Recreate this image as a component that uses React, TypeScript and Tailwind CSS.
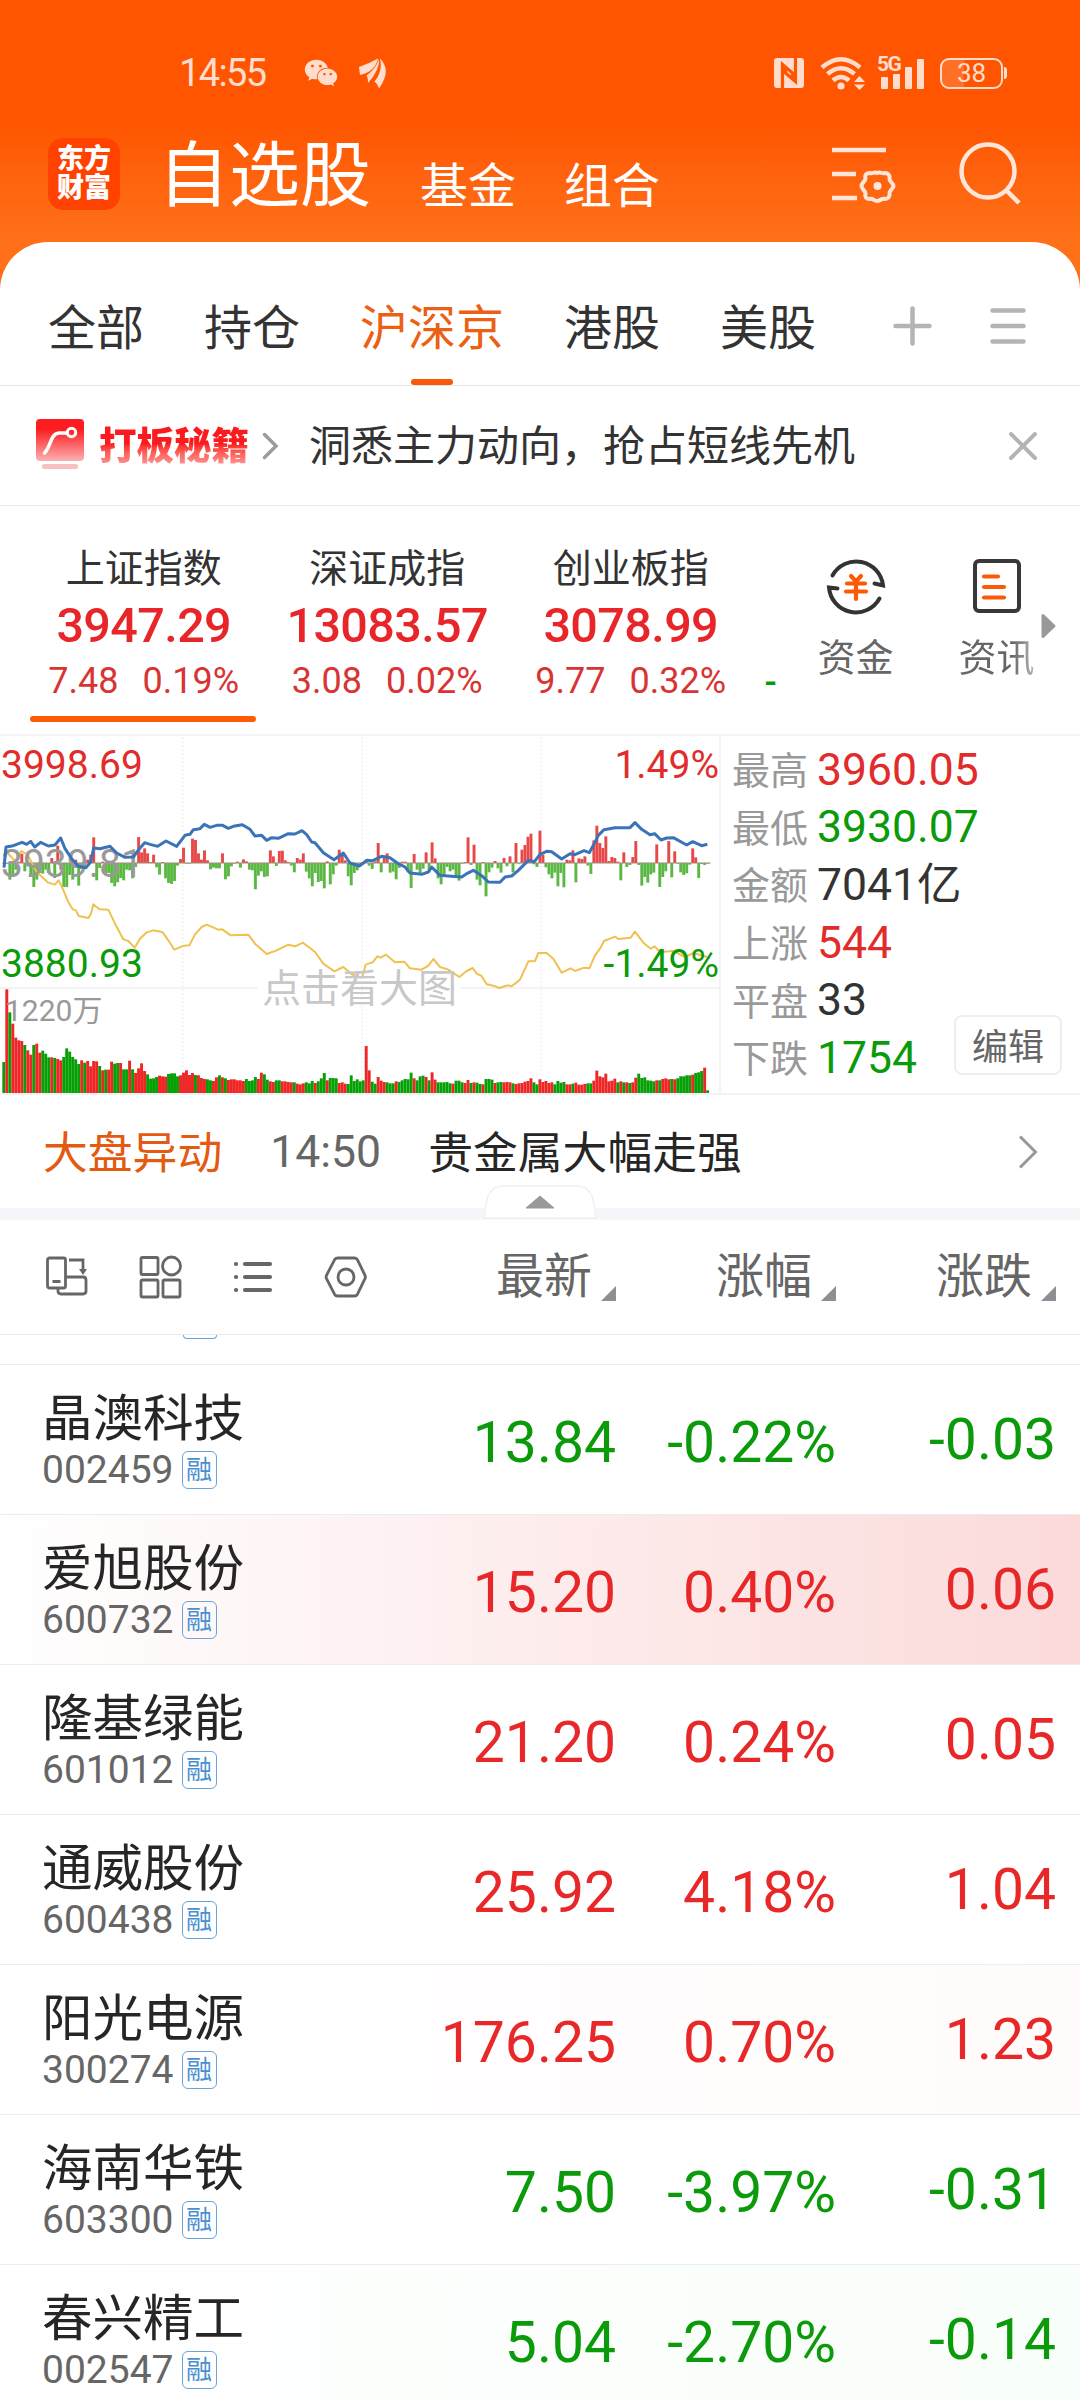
import { FaWeixin } from "react-icons/fa";

const indices = [
  { name: "上证指数", value: "3947.29", diff: "7.48", pct: "0.19%", active: true },
  { name: "深证成指", value: "13083.57", diff: "3.08", pct: "0.02%", active: false },
  { name: "创业板指", value: "3078.99", diff: "9.77", pct: "0.32%", active: false },
];

const summary = [
  { label: "最高", value: "3960.05", color: "text-[#e22c2c]" },
  { label: "最低", value: "3930.07", color: "text-[#0a9a0a]" },
  { label: "金额", value: "7041亿", color: "text-[#333333]" },
  { label: "上涨", value: "544", color: "text-[#e22c2c]" },
  { label: "平盘", value: "33", color: "text-[#333333]" },
  { label: "下跌", value: "1754", color: "text-[#0a9a0a]" },
];

const stocks = [
  { name: "晶澳科技", code: "002459", price: "13.84", pct: "-0.22%", diff: "-0.03", bg: "" },
  { name: "爱旭股份", code: "600732", price: "15.20", pct: "0.40%", diff: "0.06", bg: "bg-linear-to-r from-white to-[#fbdada]" },
  { name: "隆基绿能", code: "601012", price: "21.20", pct: "0.24%", diff: "0.05", bg: "" },
  { name: "通威股份", code: "600438", price: "25.92", pct: "4.18%", diff: "1.04", bg: "" },
  { name: "阳光电源", code: "300274", price: "176.25", pct: "0.70%", diff: "1.23", bg: "bg-linear-to-r from-white to-[#fffbfb]" },
  { name: "海南华铁", code: "603300", price: "7.50", pct: "-3.97%", diff: "-0.31", bg: "" },
  { name: "春兴精工", code: "002547", price: "5.04", pct: "-2.70%", diff: "-0.14", bg: "bg-linear-to-r from-white to-[#f8fef9]" },
];

// one value per minute; negative = falling minute
const volume = [
  -93, 311, -242, 208, 166, 158, 156, -144, 128, 115,
  -144, 148, 121, -127, -118, -107, 107, -105, 102, 98,
  -108, -134, -124, -108, -101, -87, 98, -91, 96, 80,
  96, 95, -81, 68, -70, 70, 94, -88, -90, 90,
  -71, -71, 97, -71, 60, 74, 89, 66, -56, -43,
  -44, -48, 52, 50, 49, -57, -59, -59, -50, 53,
  61, 68, 54, 60, -54, 53, 45, 42, -41, -38,
  36, 47, -53, 47, -44, 39, 41, 41, 38, 38,
  36, -42, -36, -38, -48, 42, 61, -56, -40, 35,
  33, -38, -38, 35, 35, 33, 32, -32, 28, 26,
  29, -32, -29, -36, 30, -35, -44, -60, 38, -45,
  -45, -44, 30, 32, 28, -27, -53, -36, -41, -35,
  -38, 141, 68, -34, -28, 48, 37, 33, -32, -29,
  -29, 35, -33, -38, -42, -41, -61, 44, -38, -50,
  -52, 48, -38, 62, 40, -32, -32, -32, -33, -29,
  28, -37, -37, -32, 30, 39, -30, 32, -31, -27,
  26, -42, -42, -40, 30, -32, -33, 32, 33, 32,
  -29, 27, 29, 30, 34, 36, 44, -32, -26, 41,
  33, 36, 30, 32, -26, -36, -31, -33, 26, 26,
  -28, 31, 25, 25, 27, -29, -29, 37, 67, 50,
  47, 58, 35, 37, 43, -32, 35, -32, 32, -30,
  32, 46, -58, -45, -47, -38, -37, -35, 38, -38,
  42, 44, 41, -42, 41, -44, -50, -50, -53, -53,
  55, -60, -62, -66, 76, -8,
];

const momentum = [
  0, 0, -50, -35, -20, 4, 28, -25, -10, -40,
  -72, -50, -30, -32, -20, -30, 15, -45, 52, -20,
  -72, -72, -36, -50, 10, -68, -18, -15, 10, 25,
  77, -52, -15, 4, -30, -30, -60, -70, -58, -45,
  -52, -20, -22, -46, -12, 78, 32, 44, 29, 3,
  25, -13, -35, 3, -46, -60, -63, -54, -8, 12,
  46, 0, -2, 73, 69, 29, 10, 38, 8, -19,
  -14, -16, -16, 29, -49, -40, -10, 0, 4, -14,
  11, 5, -20, -22, -79, -38, -25, -42, -40, 38,
  20, -9, 36, 37, 8, 3, -8, -28, 15, 10,
  29, -26, -46, -70, -30, -57, -54, -76, 5, -64,
  -34, -8, 40, 25, 8, -40, -67, -30, -22, -6,
  -4, 10, -8, -18, 5, 60, -28, 22, 29, -29,
  -26, -49, -15, 4, 4, -28, -75, 27, -20, -30,
  -17, 32, -28, 62, 14, -46, -64, -38, -12, -25,
  -20, -40, -53, -1, 3, 77, -6, 55, -50, -67,
  3, -100, -28, -14, 6, -16, -29, 15, -10, 20,
  -28, 60, -2, 40, 54, 79, 88, -4, -12, 97,
  25, -13, -34, -46, -29, -70, -30, -73, 10, 8,
  38, -58, 14, 12, 20, -8, -33, 68, 112, 60,
  45, 80, 6, 18, 15, 4, -52, 32, -12, -6,
  18, 66, -6, -68, -42, -59, -34, -29, 56, -72,
  -42, -25, 66, -43, 35, 0, -28, -36, -31, -5,
  44, 17, -45, -3, -6, 0,
];

const indexLine =
  "12,412 18,350 40,346 66,336 80,342 92,333 104,350 122,336 145,347 165,344 182,323 195,355 215,385 235,408 258,412 272,395 281,353 300,355 330,348 350,368 375,381 400,380 416,358 434,337 450,342 473,348 498,332 530,348 555,315 570,312 580,298 600,295 613,282 630,291 650,285 668,285 685,294 700,288 727,283 750,297 765,317 785,315 800,330 815,322 835,324 865,310 885,311 906,301 920,313 935,335 945,337 970,367 1002,388 1030,368 1050,398 1078,407 1100,390 1118,391 1145,378 1170,382 1195,400 1215,410 1230,428 1265,432 1285,425 1295,410 1320,435 1345,437 1385,440 1400,430 1420,420 1445,436 1465,455 1500,456 1515,440 1535,437 1555,420 1585,390 1603,394 1620,372 1640,363 1655,364 1685,386 1710,370 1725,373 1752,361 1768,367 1780,345 1795,315 1812,298 1845,292 1890,292 1905,277 1925,297 1950,313 1964,310 1983,329 2000,323 2020,322 2060,344 2078,334 2105,346 2122,342";

const averageLine =
  "20,365 45,392 64,362 82,372 110,425 145,457 165,463 176,450 188,475 205,515 218,537 228,540 236,557 265,563 273,550 280,522 298,537 325,538 345,580 370,627 385,632 404,652 420,625 440,606 460,600 488,606 505,630 523,658 552,646 568,645 585,612 605,590 620,583 655,598 667,597 692,615 745,613 765,640 800,671 830,660 865,643 885,648 909,637 945,665 970,700 1003,723 1030,710 1055,732 1086,742 1097,703 1118,696 1132,678 1142,682 1158,673 1185,696 1213,694 1230,714 1265,718 1285,706 1300,686 1320,710 1345,718 1378,740 1400,722 1418,713 1430,730 1445,737 1460,762 1480,766 1498,773 1525,765 1535,768 1560,748 1585,693 1605,692 1615,668 1640,668 1660,685 1685,727 1712,714 1725,722 1752,712 1768,714 1785,675 1800,655 1812,632 1845,619 1855,626 1892,622 1905,604 1930,637 1952,655 1964,648 1980,665 2020,662 2055,680 2080,668 2122,680";

function StatusBar() {
  return (
    <div className="flex h-[146px] items-center pl-[179px] text-[#ffdccb]">
      <span className="w-[90px] text-[38px] leading-none tracking-[-1.600px]">14:55</span>
      <FaWeixin className="ml-[35px] h-[34px] w-[34px]" />
      <svg className="ml-[21px]" width="28" height="30" viewBox="0 0 28 30" fill="currentColor">
        <path d="M0 9Q9 6 19 0.500Q16 14 1 17Z" />
        <path d="M20 0.500Q21 12 9 25Q9 19 7.500 17.500Q17 11 20 0.500Z" />
        <path d="M21 0.500Q33 12 20 30.500Q19 26 15.500 23.500Q24 13 21 0.500Z" />
      </svg>
      <svg className="ml-[387px]" width="30" height="30" viewBox="0 0 30 30">
        <rect width="30" height="30" rx="3" fill="currentColor" />
        <path d="M8.500 30V6.500L18.500 15V21M21.500 0V23.500L11.500 15V9" fill="none" stroke="#ff5500" strokeWidth="3.200" />
      </svg>
      <svg className="ml-[16px]" width="46" height="34" viewBox="0 0 46 34" fill="none" stroke="currentColor" strokeWidth="4.500">
        <path d="M2 11.500Q21 -5 40 11.500" />
        <path d="M7.500 18Q21 6.500 34.500 18" />
        <path d="M13 24.500Q21 17.500 29 24.500" />
        <circle cx="21" cy="30" r="3.600" fill="currentColor" stroke="none" />
        <path d="M34 26L39.500 20L45 26ZM34 28.500H45L39.500 34Z" fill="currentColor" stroke="none" />
      </svg>
      <div className="relative ml-[11px] h-[34px] w-[49px]">
        <span className="absolute top-0 left-0 text-[21px] leading-[16px] font-bold tracking-[-1.500px]">5G</span>
        <svg width="49" height="34" viewBox="0 0 49 34" fill="currentColor">
          <rect x="4" y="21" width="7" height="12" rx="1" />
          <rect x="16" y="18" width="7" height="15" rx="1" />
          <rect x="28" y="11" width="7" height="22" rx="1" />
          <rect x="40" y="3" width="7" height="30" rx="1" />
        </svg>
      </div>
      <div className="ml-[14px] flex h-[31px] w-[63px] items-center justify-center rounded-[9px] border-[2.500px] border-current bg-linear-to-r from-[#ff7026] from-38% to-transparent to-38% text-[26px] leading-none font-normal">
        38
      </div>
      <span className="ml-px h-3 w-[3px] rounded-r bg-current" />
    </div>
  );
}

function Header() {
  return (
    <header className="h-[290px] bg-linear-to-b from-[#ff5500] from-42% to-[#ff7018] to-82%">
      <StatusBar />
      <div className="-mt-2 flex items-start pl-12 text-white">
        <div className="flex h-[72px] w-[72px] flex-col items-center justify-center rounded-[15px] bg-[#ff4200] text-[27px] leading-[29px] font-black">
          <span>东方</span>
          <span>财富</span>
        </div>
        <div className="mt-px ml-[38px] flex items-baseline">
          <h1 className="w-[212px] text-[71px] leading-[74px] whitespace-nowrap">自选股</h1>
          <span className="relative top-[3px] ml-[50px] text-[48px] leading-none">基金</span>
          <span className="relative top-[3px] ml-[48px] text-[48px] leading-none">组合</span>
        </div>
        <svg className="mt-[8px] ml-[172px]" width="66" height="64" viewBox="0 0 66 64" fill="none" stroke="#ffe6d8" strokeWidth="4.500">
          <path d="M0 4H54M0 28H24M0 52H25" />
          <path d="M61.500 40C61.500 43 57 44 57.500 47.500C58 51 56 53 53 53C50 52 48 55 45 55C42 55 41 52 38 53C34 53 32.500 51 33.500 47.500C33 44 29.500 43 29.500 40C29.500 37 33 36 33.500 32.500C32.500 29 34 27 38 27C41 28 42 25.500 45 27C48 25.500 50 28 53 27C56 27 58 29 57.500 32.500C57 36 61.500 37 61.500 40Z" strokeWidth="4" />
          <circle cx="45.500" cy="40" r="4" fill="#ffe6d8" stroke="none" />
        </svg>
        <svg className="mt-[3px] ml-[59px]" width="66" height="66" viewBox="0 0 66 66" fill="none" stroke="#ffe6d8" strokeWidth="4.500">
          <circle cx="31" cy="30" r="26.500" />
          <path d="M49 49L62 62" />
        </svg>
      </div>
    </header>
  );
}

function CategoryTabs() {
  return (
    <nav className="flex h-[144px] items-center gap-[60px] border-b border-[#e4e4e6] pl-12 text-[48px] leading-none text-[#333333]">
      {["全部", "持仓", "沪深京", "港股", "美股"].map((t) =>
        t === "沪深京" ? (
          <div key={t} className="relative flex h-full items-center pt-[30px] text-[#ec5f14]">
            <span>{t}</span>
            <span className="absolute bottom-0 left-1/2 h-[6px] w-[42px] -translate-x-1/2 rounded-full bg-[#f9590b]" />
          </div>
        ) : (
          <span key={t} className="pt-[30px]">{t}</span>
        ),
      )}
      <div className="ml-[17px] flex items-center gap-[58px] pt-[24px]">
        <svg width="39" height="40" viewBox="0 0 39 40" stroke="#b4b4b4" strokeWidth="4.500" strokeLinecap="round">
          <path d="M2.500 20H36.500M19.500 2.500V37.500" />
        </svg>
        <svg width="36" height="40" viewBox="0 0 36 40" stroke="#b4b4b4" strokeWidth="4.500" strokeLinecap="round">
          <path d="M2.500 4.500H33.500M2.500 20H33.500M2.500 35.500H33.500" />
        </svg>
      </div>
    </nav>
  );
}

function PromoBar() {
  return (
    <div className="flex h-[120px] items-center border-b border-[#e8e8ea] pr-[42px] pl-9">
      <svg className="-mt-1" width="48" height="50" viewBox="0 0 48 50" fill="none">
        <defs>
          <linearGradient id="promo" x1="0" y1="0" x2="0" y2="1">
            <stop offset="0.250" stopColor="#fc1d20" />
            <stop offset="1" stopColor="#fdb0b2" />
          </linearGradient>
        </defs>
        <rect width="48" height="42" rx="4" fill="url(#promo)" />
        <path d="M8.500 34C15 28 14 15 23 14H31" stroke="#fff" strokeWidth="3.600" strokeLinecap="round" />
        <circle cx="35.500" cy="13.500" r="4.200" stroke="#fff" strokeWidth="3" />
        <rect x="6" y="45" width="36" height="5" rx="2" fill="#f8c0c2" />
      </svg>
      <span className="ml-[15px] bg-linear-to-b from-[#fb1a1e] from-45% to-[#fba0a2] bg-clip-text text-[37.500px] leading-[44px] font-black text-transparent">
        打板秘籍
      </span>
      <svg className="ml-[13px]" width="17" height="28" viewBox="0 0 17 28" fill="none" stroke="#9c9c9c" strokeWidth="3.500" strokeLinecap="round">
        <path d="M2.500 2.500L14 14L2.500 25.500" />
      </svg>
      <span className="mt-[2px] ml-[30px] text-[42px] leading-none text-[#333333]">洞悉主力动向，抢占短线先机</span>
      <svg className="ml-auto" width="30" height="30" viewBox="0 0 30 30" stroke="#b4b4b4" strokeWidth="4" strokeLinecap="round">
        <path d="M3 3L27 27M27 3L3 27" />
      </svg>
    </div>
  );
}

function IndexStrip() {
  return (
    <section className="flex h-[230px] border-b-2 border-[#f5f5f7] pl-[22px]">
      {indices.map((it) => (
        <div key={it.name} className="relative flex w-[243.500px] shrink-0 flex-col items-center pt-[40px]">
          <span className="text-[39px] leading-[46px] text-[#333333]">{it.name}</span>
          <span className="mt-[6px] text-[48.500px] leading-[56px] font-medium tracking-[-0.600px] text-[#e8262a]">{it.value}</span>
          <span className="mt-[6px] flex gap-[24px] text-[36px] leading-[42px] text-[#d83434]">
            <span>{it.diff}</span>
            <span>{it.pct}</span>
          </span>
          {it.active && <span className="absolute bottom-[12px] left-[8px] h-[6px] w-[226px] rounded-full bg-[#ff5a05]" />}
        </div>
      ))}
      <span className="mt-[156px] w-[30px] shrink-0 pl-[12px] text-[36px] leading-[42px] font-medium text-[#0a9a0a]">-</span>
      <div className="ml-[33px] flex w-[80px] shrink-0 flex-col items-center pt-[50px]">
        <svg width="62" height="62" viewBox="0 0 62 62" fill="none" stroke="#333" strokeWidth="4" strokeLinecap="round" strokeLinejoin="miter">
          <path d="M7.500 19.500A27 27 0 0 1 58 29.500L49.500 27.500" />
          <path d="M54.500 42.500A27 27 0 0 1 4 31.500L12.500 32.500" />
          <path d="M26 20L31 25.500L36 20M22 27.500H40M21 35.500H41M31 26V43" stroke="#fb5a08" strokeWidth="4.200" />
        </svg>
        <span className="mt-[18px] text-[38px] leading-[44px] text-[#666666]">资金</span>
      </div>
      <div className="ml-[61px] flex w-[80px] shrink-0 flex-col items-center pt-[53px]">
        <svg width="48" height="54" viewBox="0 0 48 54" fill="none" stroke="#383838" strokeWidth="4">
          <rect x="2" y="2" width="44" height="50" rx="4" />
          <path d="M11 17.500H25M11 28H31M11 38.500H31" stroke="#fb5a08" strokeWidth="4.200" strokeLinecap="round" />
        </svg>
        <span className="mt-[23px] bg-linear-to-r from-[#666666] from-70% to-[#b8b8b8] bg-clip-text text-[38px] leading-[44px] text-transparent">资讯</span>
      </div>
      <svg className="mt-[107px] ml-[4px] shrink-0" width="16" height="26" viewBox="0 0 16 26">
        <path d="M2 2.500L13 13L2 23.500Z" fill="#999" stroke="#999" strokeWidth="3" strokeLinejoin="round" />
      </svg>
    </section>
  );
}

function MinuteChart() {
  return (
    <div className="relative h-[358px] w-[721px] border-r-2 border-[#f3f3f5] text-[39px] leading-none">
      <svg className="absolute inset-0" width="720" height="358" viewBox="0 17 2160 1074">
        <g stroke="#ececee" strokeWidth="4" strokeDasharray="5 7">
          <path d="M549 22V1088M1086 22V1088M1623 22V1088" />
        </g>
        <path d="M0 773H772M1382 773H2160" stroke="#efeff1" strokeWidth="5" />
        {momentum.map((v, i) => (
          <rect key={i} x={7 + i * 8.985} y={v > 0 ? 398 - v : 398} width="9" height={Math.max(Math.abs(v), 2)} fill={v > 0 ? "#e84848" : "#5cb844"} stroke="#fff" strokeOpacity="0.250" strokeWidth="1" />
        ))}
        <path d="M8 398H2132" stroke="#9c8878" strokeWidth="3" />
        {volume.map((v, i) => (
          <rect key={i} x={7 + i * 8.985} y={1088 - Math.abs(v)} width="8.800" height={Math.abs(v)} fill={v > 0 ? "#ee2626" : "#06a006"} />
        ))}
        <polyline points={averageLine} fill="none" stroke="#f0c050" strokeWidth="6" strokeLinejoin="round" />
      </svg>
      <span className="absolute top-[10px] left-px text-[#e22c2c]">3998.69</span>
      <span className="absolute top-[10px] right-0 text-[#e22c2c]">1.49%</span>
      <span className="absolute top-[109px] left-px text-[#999999]">3939.81</span>
      <span className="absolute top-[209px] left-px text-[#0a9a0a]">3880.93</span>
      <span className="absolute top-[209px] right-0 text-[#0a9a0a]">-1.49%</span>
      <span className="absolute top-[260px] left-[5px] text-[30px] text-[#999999]">1220万</span>
      <span className="absolute top-[234px] left-[262px] text-[#c8c8c8]">点击看大图</span>
      <svg className="absolute inset-0" width="720" height="358" viewBox="0 17 2160 1074">
        <polyline points={indexLine} fill="none" stroke="#3a74b8" strokeWidth="9" strokeLinejoin="round" />
      </svg>
    </div>
  );
}

function Summary() {
  return (
    <dl className="relative flex-1 pt-[5px] pl-[11px]">
      {summary.map((s) => (
        <div key={s.label} className="flex h-[57.700px] items-center">
          <dt className="w-[85px] pt-[2px] text-[38px] leading-none text-[#999999]">{s.label}</dt>
          <dd className={`text-[44.500px] leading-none ${s.color}`}>{s.value}</dd>
        </div>
      ))}
      <button className="absolute right-[18px] bottom-[18px] h-[60px] w-[108px] rounded-lg border-2 border-[#eeeeee] bg-white pt-[5px] text-[36px] leading-none text-[#666666]">
        编辑
      </button>
    </dl>
  );
}

function NewsBar() {
  return (
    <div className="relative flex h-[125px] items-center border-b-[12px] border-[#f6f7fa] pr-[42px] pl-[43px] text-[44.800px] leading-none">
      <span className="pt-[5px] text-[#e45a10]">大盘异动</span>
      <span className="ml-[48px] w-[110px] pt-[2px] text-[44.500px] text-[#666666]">14:50</span>
      <span className="ml-[48px] pt-[5px] text-[#262626]">贵金属大幅走强</span>
      <svg className="ml-auto" width="20" height="34" viewBox="0 0 20 34" fill="none" stroke="#999" strokeWidth="3">
        <path d="M2 1.500L17.500 17L2 32.500" />
      </svg>
      <svg className="absolute bottom-[-12px] left-[483px]" width="114" height="36" viewBox="0 0 114 36">
        <path d="M1 34Q2 22 5 12Q9 2 20 2H94Q105 2 109 12Q112 22 113 34Z" fill="#fff" stroke="#f0f0f2" strokeWidth="1.500" />
        <path d="M43 24L57 12L71 24Z" fill="#999" stroke="#999" strokeLinejoin="round" />
      </svg>
    </div>
  );
}

function Column({ label }: { label: string }) {
  return (
    <div className="flex w-[220px] items-center justify-end">
      <span className="text-[48px] leading-none text-[#666666]">{label}</span>
      <svg className="mt-[32px] ml-[9px]" width="15" height="15" viewBox="0 0 15 15">
        <path d="M15 0V15H0Z" fill="#8e8e94" />
      </svg>
    </div>
  );
}

function ListHeader() {
  return (
    <div className="flex h-[115px] items-center border-b border-[#ececee] pr-6 pl-[45px]">
      <div className="flex w-[351px] items-center gap-[50px]">
        <svg width="44" height="44" viewBox="0 0 44 44" fill="none" stroke="#666" strokeWidth="2.800">
          <rect x="2.500" y="3" width="18" height="30" rx="2" />
          <path d="M7.500 26.500H15.500M24 5H38V15" />
          <path d="M34 14H42L38 20Z" fill="#666" stroke="none" />
          <path d="M21 22H38Q41 22 41 25V36Q41 39 38 39H16Q13 39 13 36V33" />
        </svg>
        <svg width="44" height="44" viewBox="0 0 44 44" fill="none" stroke="#666" strokeWidth="2.800">
          <rect x="2" y="2.500" width="17" height="17" rx="1.500" />
          <circle cx="32.500" cy="11" r="9" />
          <rect x="2" y="25" width="17" height="17" rx="1.500" />
          <rect x="24" y="25" width="17" height="17" rx="1.500" />
        </svg>
        <svg width="40" height="44" viewBox="0 0 40 44" fill="none" stroke="#666" strokeWidth="4.200" strokeLinecap="round">
          <path d="M3 9H3.100M3 22H3.100M3 35H3.100M12 9H37M12 22H37M12 35H37" />
        </svg>
        <svg width="44" height="44" viewBox="0 0 44 44" fill="none" stroke="#666" strokeWidth="2.800">
          <path d="M14.500 3H31.500Q33.500 3 34.500 4.800L42 20.300Q42.800 22 42 23.700L34.500 39.200Q33.500 41 31.500 41H14.500Q12.500 41 11.500 39.200L3.500 23.700Q2.700 22 3.500 20.300L11.500 4.800Q12.500 3 14.500 3Z" />
          <circle cx="23" cy="22" r="8" />
        </svg>
      </div>
      <Column label="最新" />
      <Column label="涨幅" />
      <Column label="涨跌" />
    </div>
  );
}

function StockRow({ stock }: { stock: (typeof stocks)[number] }) {
  const color = stock.pct.startsWith("-") ? "text-[#0a9a0a]" : "text-[#e82828]";
  return (
    <div className={`flex h-[150px] shrink-0 border-b border-[#ececee] pr-6 pl-[42px] ${stock.bg}`}>
      <div className="w-[354px] pt-[27px]">
        <p className="text-[50.500px] leading-[54px] text-[#262626]">{stock.name}</p>
        <p className="mt-[5px] flex items-center gap-[8px] text-[39px] leading-[38px] text-[#666666]">
          {stock.code}
          <span className="flex h-[38px] w-[35px] items-center justify-center rounded-md border-[1.500px] border-[#6ba3d6] text-[26px] leading-none text-[#4a8fd0]">
            融
          </span>
        </p>
      </div>
      <span className={`w-[220px] pt-[48px] text-right text-[57px] leading-[60px] ${color}`}>{stock.price}</span>
      <span className={`w-[220px] pt-[48px] text-right text-[57px] leading-[60px] ${color}`}>{stock.pct}</span>
      <span className={`w-[220px] pt-[45px] text-right text-[57px] leading-[60px] ${color}`}>{stock.diff}</span>
    </div>
  );
}

export default function App() {
  return (
    <div className="h-[2400px] w-[1080px] overflow-hidden bg-white font-['Roboto','Noto_Sans_CJK_SC',sans-serif]">
      <Header />
      <main className="-mt-12 rounded-t-[48px] bg-white">
        <CategoryTabs />
        <PromoBar />
        <IndexStrip />
        <section className="flex h-[359px] border-b-2 border-[#f3f3f5]">
          <MinuteChart />
          <Summary />
        </section>
        <NewsBar />
        <ListHeader />
        <div className="h-[30px] border-b border-[#ececee] pl-[183px]">
          <div className="h-1 w-[34px] rounded-b-md border border-t-0 border-[#6ba3d6]" />
        </div>
        {stocks.map((s) => (
          <StockRow key={s.code} stock={s} />
        ))}
      </main>
    </div>
  );
}
